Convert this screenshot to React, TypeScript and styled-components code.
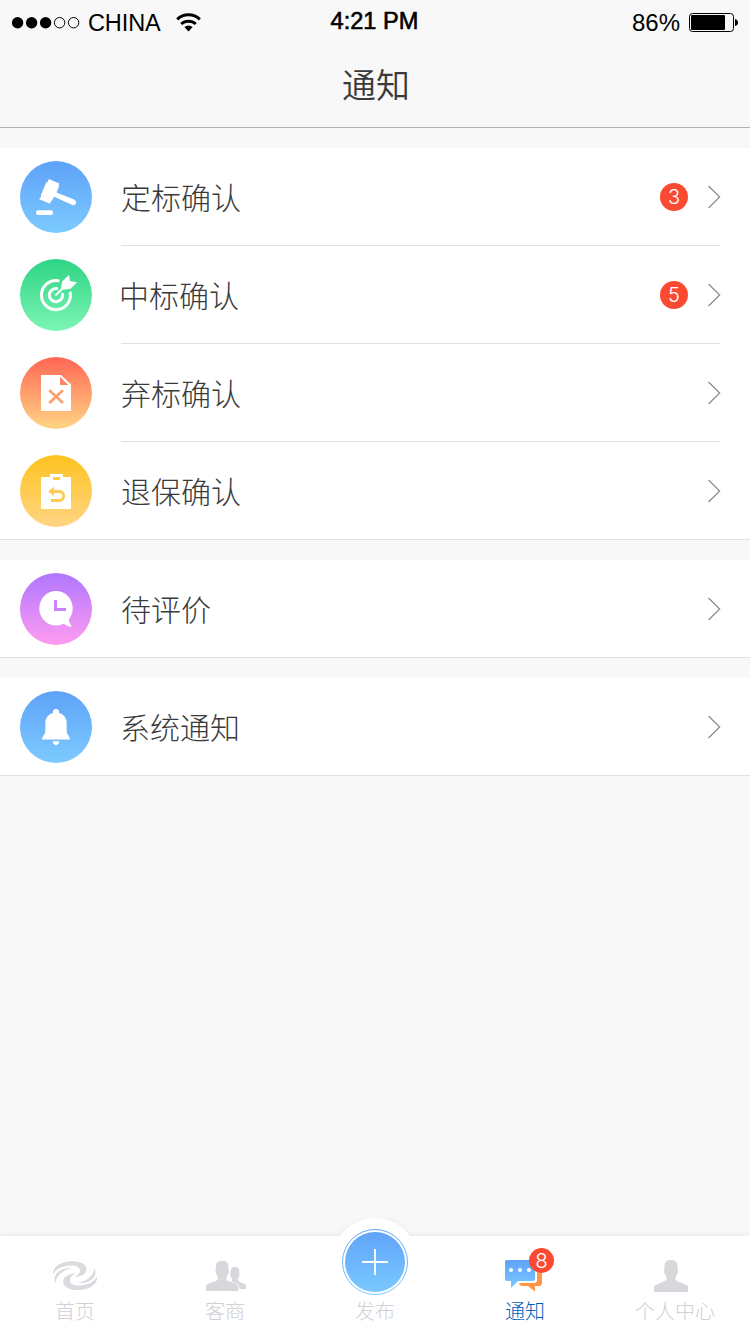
import React from "react";
import styled, { createGlobalStyle, css } from "styled-components";

const GlobalStyle = createGlobalStyle`
  * { box-sizing: border-box; }
  body { margin: 0; background: #f8f8f8; }
`;

const cjk = `"Noto Sans CJK SC", sans-serif`;

const Screen = styled.div`
  width: 750px;
  height: 1334px;
  display: flex;
  flex-direction: column;
  overflow: hidden;
  background: #f8f8f8;
  color: #3a3a3a;
  font-family: ${cjk};
  font-weight: 300;
`;

const Header = styled.header`
  flex: none;
  height: 128px;
  border-bottom: 1px solid #b2b2b2;
`;

const StatusBar = styled.div`
  display: grid;
  grid-template-columns: 1fr auto 1fr;
  height: 44px;
  padding: 0 11px 0 12px;
  color: #000;
  font: 400 24px/28px "Liberation Sans", Arial, sans-serif;
`;

const Carrier = styled.div`
  display: flex;
  align-items: flex-start;
  padding-top: 9px;
`;

const CarrierName = styled.span`
  font-size: 23.5px;
  letter-spacing: -0.1px;
`;

const SignalDots = styled.svg`
  width: 68px;
  height: 12px;
  margin: 8px 8px 0 0;
`;

const Wifi = styled.svg`
  width: 25px;
  height: 19px;
  margin: 4px 0 0 15px;
`;

const Clock = styled.div`
  padding: 7px 2px 0 0;
  font-size: 23.6px;
  -webkit-text-stroke: 0.6px #000;
`;

const Power = styled.div`
  display: flex;
  justify-content: flex-end;
  padding-top: 9px;
`;

const Battery = styled.svg`
  width: 50px;
  height: 20px;
  margin: 4px 0 0 9px;
`;

const Title = styled.h1`
  margin: 15px 0 0;
  padding-left: 2px;
  text-align: center;
  font-size: 34px;
  font-weight: 350;
  line-height: 50px;
`;

const List = styled.main`
  flex: 1;
  display: flex;
  flex-direction: column;
  gap: 20px;
  padding-top: 20px;
`;

const Group = styled.section`
  background: #fff;
  border-bottom: 1px solid #e1e1e1;
`;

const Row = styled.div`
  display: flex;
  height: 98px;
  padding: 0 29px 0 20px;
  &:last-child { height: 97px; }
`;

const RoundIcon = styled.svg`
  flex: none;
  width: 72px;
  height: 72px;
  margin: 13px 29px 0 0;
`;

const RowBody = styled.div`
  flex: 1;
  display: flex;
  align-items: center;
  margin-right: 1px;
  ${Row}:not(:last-child) > & { border-bottom: 1px solid #e1e1e1; }
`;

const RowLabel = styled.span<{ $nudge?: number }>`
  flex: 1;
  margin-left: ${(p) => p.$nudge ?? 0}px;
  font-size: 30px;
  line-height: 44px;
  padding-bottom: 2px;
`;

const badgeText = css`
  color: #fff;
  background: #fa4b32;
  border-radius: 50%;
  text-align: center;
  font-family: Inter, "Liberation Sans", sans-serif;
  font-weight: 300;
`;

const Badge = styled.span`
  ${badgeText}
  width: 28px;
  height: 28px;
  margin: 1px 19px 0 0;
  font-size: 20px;
  line-height: 29px;
`;

const Chevron = styled.svg`
  width: 14px;
  height: 24px;
  margin: 1px -1px 0 0;
`;

const TabBar = styled.nav`
  flex: none;
  display: grid;
  grid-template-columns: repeat(5, 1fr);
  height: 98px;
  background: #fff;
  box-shadow: 0 -1px 6px rgba(0, 0, 0, 0.06);
`;

const Tab = styled.div<{ $active?: boolean }>`
  position: relative;
  display: flex;
  flex-direction: column;
  align-items: center;
  justify-content: flex-end;
  padding-bottom: 8px;
  color: ${(p) => (p.$active ? "#0060b6" : "#d0d0d5")};
  font-size: 20px;
  line-height: 30px;
`;

const TabIcon = styled.svg`
  width: 60px;
  height: 40px;
  margin-bottom: 1px;
`;

const TabBadge = styled.span`
  ${badgeText}
  position: absolute;
  left: 79px;
  top: 12px;
  width: 25px;
  height: 25px;
  font-size: 20.5px;
  line-height: 26px;
`;

const PublishButton = styled.svg`
  position: absolute;
  left: 31px;
  top: -18px;
  width: 88px;
  height: 88px;
`;

const TabText = styled.span`
  position: relative;
`;

type Tone = { id: string; from: string; to: string };

const tones: Record<string, Tone> = {
  blue: { id: "blue", from: "#5ea2f8", to: "#7ccaff" },
  green: { id: "green", from: "#2dd484", to: "#7df5b4" },
  red: { id: "red", from: "#ff6655", to: "#ffd584" },
  yellow: { id: "yellow", from: "#fec320", to: "#ffd583" },
  purple: { id: "purple", from: "#b076ff", to: "#ff9cf0" },
  sky: { id: "sky", from: "#5ea2f8", to: "#7ccaff" },
};

function Disc({ tone, children }: { tone: Tone; children: React.ReactNode }) {
  return (
    <RoundIcon viewBox="0 0 72 72">
      <defs>
        <linearGradient id={tone.id} x1="0" y1="0" x2="0" y2="72" gradientUnits="userSpaceOnUse">
          <stop stopColor={tone.from} />
          <stop offset="1" stopColor={tone.to} />
        </linearGradient>
      </defs>
      <circle cx="36" cy="36" r="36" fill={`url(#${tone.id})`} />
      {children}
    </RoundIcon>
  );
}

const Gavel = () => (
  <g fill="#fff">
    <path d="M28.800 18 39.400 22.400 38.700 24.200 39.200 25.200 36.600 31.600 54.600 38.800Q57 40.400 56 42.600 54.800 44.800 52.400 44L34 35.800 31.800 39.800 30.800 40.600 30.200 42.800 19.200 38.300 20.200 36.400 21.100 36 20.800 34.500 26 21.700 27.900 20.600Z" />
    <rect x="16" y="49.200" width="17" height="4.800" rx="2" />
  </g>
);

const Target = () => (
  <g fill="none" stroke="#fff" strokeWidth="3" strokeLinecap="round">
    <path d="M38.100 21.800A14.500 14.500 0 1 0 50.300 34" />
    <path d="M36.700 29.500A6.600 6.600 0 1 0 42.500 35.300" />
    <path d="M36 36 43 29" strokeWidth="2" />
    <path d="M41 28 42.300 22.200 48.900 16 50 22 57 23.200 51 29.600 43.500 30.800Z" fill="#fff" stroke="none" />
  </g>
);

const RejectedFile = () => (
  <g>
    <path d="M21 18H41L51 27.500V54H21Z" fill="#fff" />
    <path d="M40 19.700V28H48.300Z" fill="#ff8463" />
    <path d="M29.300 33.200 43 46.100M43 33.200 29.300 46.100" stroke="#ffa06d" strokeWidth="2.700" />
  </g>
);

const ReturnClipboard = () => (
  <g>
    <path d="M30 19H43V22H50Q51 22 51 23V53Q51 54 50 54H22Q21 54 21 53V23Q21 22 22 22H30ZM33 22V25H40V22Z" fill="#fff" fillRule="evenodd" />
    <path d="M32 36.500H39.200A4.500 4.500 0 0 1 39.200 45.500H31" fill="none" stroke="#fecb52" strokeWidth="2.800" />
    <path d="M28.200 36.400 33.800 31.800V41Z" fill="#fecb52" />
  </g>
);

const PendingChat = () => (
  <g>
    <ellipse cx="36" cy="35.300" rx="16.700" ry="17.300" fill="#fff" />
    <path d="M43 50.500Q46.500 53 51 54 51.800 53.800 51.300 53 49 49.500 48.800 46Z" fill="#fff" />
    <path d="M34 27H37V35H46V38H34Z" fill="#cd81fa" />
  </g>
);

const Bell = () => (
  <g fill="#fff">
    <path d="M36 18A3 3 0 0 0 33 21V21.900C28 23.200 25.300 27.300 25.300 32V40C25.300 43.800 22.200 44.800 22 48.600H50C49.800 44.800 46.700 43.800 46.700 40V32C46.700 27.300 44 23.200 39 21.900V21A3 3 0 0 0 36 18Z" />
    <path d="M32.600 50.300H39.400Q38.800 54 36 54 33.200 54 32.600 50.300Z" />
  </g>
);

const person =
  "M17 0C21.500 0 23.600 2.200 23.600 6V9.500Q24.500 10 23.800 12.800 23.500 14.500 22.500 14.700 22.200 17 21.400 18V19.500Q22.200 21.200 26 22.500C31 24.200 34 25.200 34 26.800V32H0V26.800C0 25.200 3 24.200 8 22.500Q11.800 21.200 12.600 19.500V18Q11.800 17 11.500 14.700 10.500 14.500 10.200 12.800 9.500 10 10.400 9.500V6C10.400 2.200 12.500 0 17 0Z";

type Item = { label: string; tone: Tone; icon: React.ReactNode; count?: number; nudge?: number };

const groups: Item[][] = [
  [
    { label: "定标确认", tone: tones.blue, icon: <Gavel />, count: 3 },
    { label: "中标确认", tone: tones.green, icon: <Target />, count: 5, nudge: -2 },
    { label: "弃标确认", tone: tones.red, icon: <RejectedFile /> },
    { label: "退保确认", tone: tones.yellow, icon: <ReturnClipboard /> },
  ],
  [{ label: "待评价", tone: tones.purple, icon: <PendingChat /> }],
  [{ label: "系统通知", tone: tones.sky, icon: <Bell />, nudge: -1 }],
];

export default function App() {
  return (
    <Screen>
      <GlobalStyle />
      <Header>
        <StatusBar>
          <Carrier>
            <SignalDots viewBox="0 0 68 12">
              {[0, 1, 2].map((i) => (
                <circle key={i} cx={5.6 + i * 14} cy="5.700" r="5.700" />
              ))}
              <g fill="none" stroke="#000">
                <circle cx="47.600" cy="5.700" r="5.200" />
                <circle cx="61.600" cy="5.700" r="5.200" />
              </g>
            </SignalDots>
            <CarrierName>CHINA</CarrierName>
            <Wifi viewBox="0 0 25 19">
              <g fill="none" stroke="#000" strokeWidth="3">
                <path d="M1.200 6.300A16.500 16.500 0 0 1 23.800 6.300" />
                <path d="M5.200 11A10.800 10.800 0 0 1 19.800 11" />
              </g>
              <path d="M8.400 14.100Q12.500 11 16.600 14.100L12.500 18.500Z" />
            </Wifi>
          </Carrier>
          <Clock>4:21 PM</Clock>
          <Power>
            86%
            <Battery viewBox="0 0 50 20">
              <rect x="0.500" y="0.500" width="44" height="18" rx="3" fill="none" stroke="#000" />
              <rect x="2" y="2" width="34" height="15" rx="1" />
              <path d="M46 6Q49 7 49 9.500 49 12 46 13Z" />
            </Battery>
          </Power>
        </StatusBar>
        <Title>通知</Title>
      </Header>
      <List>
        {groups.map((rows, i) => (
          <Group key={i}>
            {rows.map((row) => (
              <Row key={row.label}>
                <Disc tone={row.tone}>{row.icon}</Disc>
                <RowBody>
                  <RowLabel $nudge={row.nudge}>{row.label}</RowLabel>
                  {row.count && <Badge>{row.count}</Badge>}
                  <Chevron viewBox="0 0 14 24">
                    <path d="M1.500 1 12.700 12 1.500 23" fill="none" stroke="#8a8a8a" strokeWidth="1.200" />
                  </Chevron>
                </RowBody>
              </Row>
            ))}
          </Group>
        ))}
      </List>
      <TabBar>
        <Tab>
          <TabIcon viewBox="0 0 60 40">
            <g fill="#dadadf">
              <path d="M8 20C7 11 18 5.500 28 6.200C39 6.500 44 12 40.500 17.500C38.500 20.500 34 21.800 29.500 22C37 19 37.500 10.500 27 10.500C18 10.400 10 14 8 20Z" />
              <path d="M10.500 28.500C6.500 20 15 12 27.500 13C19.500 14.500 11.500 19 10.500 28.500Z" />
              <path d="M52 21.500C53 30.500 42 35.500 32 35C21 34.700 16 29.500 19 23.500C21 20 26 18.600 30.500 18.500C23 21.500 22.500 30.500 33 30.500C42 30.500 49.500 27 52 21.500Z" />
              <path d="M49.500 13C53.500 21.500 45 29 32.500 28C40.500 26.500 48.500 22 49.500 13Z" />
            </g>
          </TabIcon>
          首页
        </Tab>
        <Tab>
          <TabIcon viewBox="0 0 60 40">
            <g fill="#d7d7dc">
              <path d={person} transform="translate(28.900 12) scale(.65 .69)" />
              <path d={person} transform="translate(11 5.700) scale(.95)" stroke="#fff" strokeWidth="2" paintOrder="stroke" />
            </g>
          </TabIcon>
          客商
        </Tab>
        <Tab>
          <PublishButton viewBox="0 0 88 88">
            <defs>
              <linearGradient id="publish" x1="0" y1="11" x2="0" y2="77" gradientUnits="userSpaceOnUse">
                <stop stopColor="#5ea2f8" />
                <stop offset="1" stopColor="#7ccaff" />
              </linearGradient>
              <filter id="lift" x="-10%" y="-10%" width="120%" height="120%">
                <feDropShadow dx="0" dy="-1" stdDeviation="2" floodOpacity="0.05" />
              </filter>
              <clipPath id="above">
                <rect x="-6" y="-8" width="100" height="26" />
              </clipPath>
            </defs>
            <g clipPath="url(#above)">
              <circle cx="44" cy="43" r="43" fill="#fff" filter="url(#lift)" />
            </g>
            <circle cx="44" cy="44" r="32.500" fill="#fff" stroke="url(#publish)" />
            <circle cx="44" cy="44" r="30" fill="url(#publish)" />
            <path d="M31 44H57M44 31V57" stroke="#fff" strokeWidth="1.800" />
          </PublishButton>
          <TabText>发布</TabText>
        </Tab>
        <Tab $active>
          <TabIcon viewBox="0 0 60 40">
            <defs>
              <linearGradient id="bubble" x1="0" y1="0" x2="0" y2="1">
                <stop stopColor="#5ea2f8" />
                <stop offset="1" stopColor="#7ccaff" />
              </linearGradient>
            </defs>
            <path d="M42 17H45Q47 17 47 19V28Q47 31 44 31H40V36.500L33 31H27Q24.500 30.500 24 28H39Q42 28 42 25Z" fill="#ff9646" />
            <path d="M12 5H38Q40 5 40 7V24Q40 26 38 26H23L16 33V26H12Q10 26 10 24V7Q10 5 12 5Z" fill="url(#bubble)" />
            <g fill="#fff">
              <circle cx="16" cy="15" r="2" />
              <circle cx="25" cy="15" r="2" />
              <circle cx="34" cy="15" r="2" />
            </g>
          </TabIcon>
          <TabBadge>8</TabBadge>
          通知
        </Tab>
        <Tab>
          <TabIcon viewBox="0 0 60 40">
            <path d={person} transform="translate(9 5)" fill="#d7d7dc" />
          </TabIcon>
          个人中心
        </Tab>
      </TabBar>
    </Screen>
  );
}
